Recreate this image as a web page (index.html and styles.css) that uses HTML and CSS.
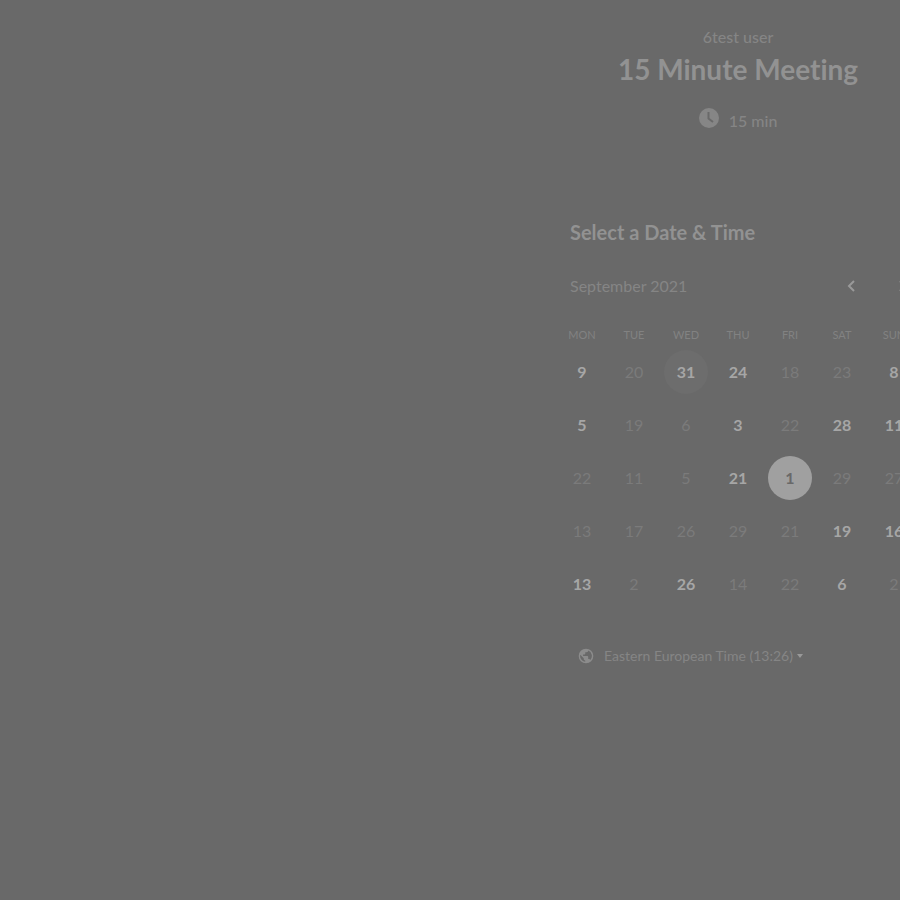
FILE: index.html
```html
<!DOCTYPE html>
<html lang="en">
<head>
<meta charset="utf-8">
<title>15 Minute Meeting</title>
<link rel="stylesheet" href="styles.css">
</head>
<body>
<main class="booking">
  <header class="intro">
    <p class="host">6test user</p>
    <h1 class="title">15 Minute Meeting</h1>
    <p class="duration">
      <svg class="clock" viewBox="0 0 20 20" aria-hidden="true"><circle cx="10" cy="10" r="10"/><path d="M9.500 4v6.500l4.500 3.500"/></svg>
      <span>15 min</span>
    </p>
  </header>
  <section class="picker">
    <h2 class="heading">Select a Date &amp; Time</h2>
    <div class="month">
      <span class="month-name">September 2021</span>
      <button class="arrow" type="button" aria-label="Previous month"><svg viewBox="0 0 8 12"><path d="M7 1 2 6l5 5"/></svg></button>
      <button class="arrow" type="button" aria-label="Next month"><svg viewBox="0 0 8 12"><path d="m1 1 5 5-5 5"/></svg></button>
    </div>
    <table class="calendar">
      <thead><tr><th>MON</th><th>TUE</th><th>WED</th><th>THU</th><th>FRI</th><th>SAT</th><th>SUN</th></tr></thead>
      <tbody>
        <tr><td><button class="day open">9</button></td><td><button class="day" disabled>20</button></td><td><button class="day open today">31</button></td><td><button class="day open">24</button></td><td><button class="day" disabled>18</button></td><td><button class="day" disabled>23</button></td><td><button class="day open">8</button></td></tr>
        <tr><td><button class="day open">5</button></td><td><button class="day" disabled>19</button></td><td><button class="day" disabled>6</button></td><td><button class="day open">3</button></td><td><button class="day" disabled>22</button></td><td><button class="day open">28</button></td><td><button class="day open">11</button></td></tr>
        <tr><td><button class="day" disabled>22</button></td><td><button class="day" disabled>11</button></td><td><button class="day" disabled>5</button></td><td><button class="day open">21</button></td><td><button class="day open selected">1</button></td><td><button class="day" disabled>29</button></td><td><button class="day" disabled>27</button></td></tr>
        <tr><td><button class="day" disabled>13</button></td><td><button class="day" disabled>17</button></td><td><button class="day" disabled>26</button></td><td><button class="day" disabled>29</button></td><td><button class="day" disabled>21</button></td><td><button class="day open">19</button></td><td><button class="day open">16</button></td></tr>
        <tr><td><button class="day open">13</button></td><td><button class="day" disabled>2</button></td><td><button class="day open">26</button></td><td><button class="day" disabled>14</button></td><td><button class="day" disabled>22</button></td><td><button class="day open">6</button></td><td><button class="day" disabled>2</button></td></tr>
      </tbody>
    </table>
    <button class="zone" type="button">
      <svg class="globe" viewBox="0 0 24 24" aria-hidden="true"><path d="M12 1a11 11 0 1 0 0 22 11 11 0 0 0 0-22Zm-1.200 19.700A8.800 8.800 0 0 1 3.400 10l5.200 5.300v1.100c0 1.200 1 2.200 2.200 2.200Zm7.700-2.800a2.200 2.200 0 0 0-2.100-1.500h-1.100v-3.300c0-.6-.5-1.100-1.100-1.100H7.600V9.800h2.200c.6 0 1.100-.5 1.100-1.100V6.500h2.200c1.200 0 2.200-1 2.200-2.200v-.5a8.800 8.800 0 0 1 3.200 14.100Z"/></svg>
      <span>Eastern European Time (13:26)</span>
      <svg class="caret" viewBox="0 0 6 4" aria-hidden="true"><path d="M0 0h6L3 4Z"/></svg>
    </button>
  </section>
</main>
</body>
</html>
```
FILE: styles.css
```css
* { box-sizing: border-box; }

body {
  margin: 0;
  min-height: 100vh;
  overflow-x: hidden;
  background: #696969;
  color: #858585;
  font-family: Lato, "Open Sans", sans-serif;
  font-size: 16px;
  font-variant-ligatures: none;
  line-height: 20px;
}

h1, h2, p { margin: 0; }

button {
  padding: 0;
  border: 0;
  background: none;
  color: inherit;
  font: inherit;
}

.booking {
  width: 364px;
  margin-left: calc(50% + 106px);
  padding-top: 27px;
}

.intro { text-align: center; }

.title {
  margin-top: 4px;
  color: #929292;
  font-size: 28px;
  line-height: 36px;
  white-space: nowrap;
}

.host, .duration { font-weight: 500; }

.duration {
  display: flex;
  justify-content: center;
  align-items: flex-end;
  gap: 10px;
  margin-top: 21px;
}

.clock { width: 20px; height: 20px; margin-bottom: 3px; fill: #868686; }
.clock path { fill: none; stroke: #696969; stroke-width: 2; }

.picker { padding-top: 89px; }

.heading {
  padding-left: 14px;
  color: #929292;
  font-size: 20px;
  line-height: 24px;
}

.month {
  display: flex;
  align-items: center;
  margin: 32px -9px 0 14px;
}

.month-name { flex: 1; }

.arrow { display: flex; justify-content: center; width: 52px; }
.arrow svg { width: 8px; height: 12px; fill: none; stroke: #999; stroke-width: 2; }

.calendar {
  width: 100%;
  margin-top: 28px;
  border-collapse: collapse;
  table-layout: fixed;
  text-align: center;
}

th { padding: 0; color: #828282; font-size: 11px; font-weight: 400; line-height: 21px; }
td { height: 53px; padding: 0; }

.day {
  width: 44px;
  height: 44px;
  border-radius: 50%;
  color: #7b7b7b;
}

.open { color: #a6a6a6; font-weight: 700; }
.today { background: #6d6d6d; }
.selected { background: #a0a0a0; color: #696969; }

.zone {
  display: flex;
  align-items: center;
  margin: 36px 0 0 22px;
  font-size: 14px;
  white-space: nowrap;
}

.globe { width: 16px; height: 16px; margin-right: 10px; fill: #8c8c8c; }
.caret { width: 6px; height: 4px; margin-left: 4px; fill: #999; }
```
